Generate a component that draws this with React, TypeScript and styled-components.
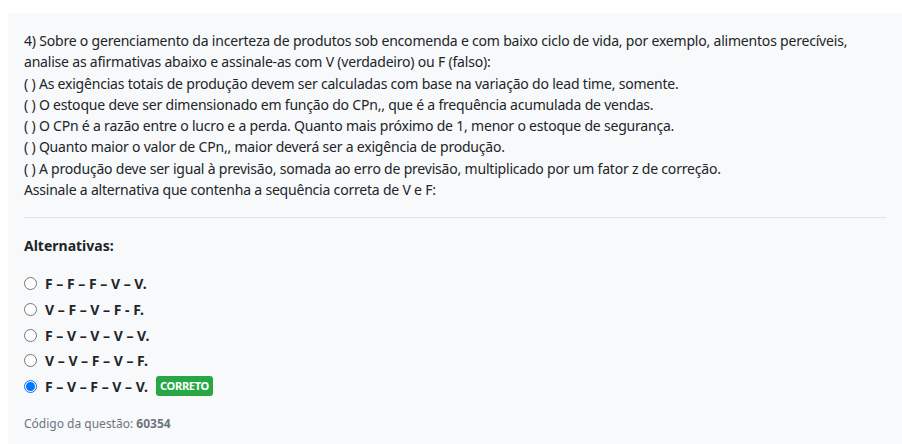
import React from "react";
import styled, { createGlobalStyle } from "styled-components";

const Global = createGlobalStyle`
  html, body { margin: 0; padding: 0; background: #fff; }
  body { padding: 13px 0 0 8px; font-family: "Noto Sans", "Open Sans", sans-serif; color: #212529; }
  * { box-sizing: border-box; }
`;

const Panel = styled.div`
  background: #f8f9fa;
  padding: 17px 16px 16px 16px;
  min-height: 431px;
`;

const Statement = styled.div`
  font-size: 14px;
  line-height: 21.3px;
  letter-spacing: -0.2px;
`;

const Line = styled.div``;

const Divider = styled.hr`
  border: 0;
  border-top: 1px solid #dee2e6;
  margin: 17px 0 17px 0;
`;

const Heading = styled.div`
  font-weight: 700;
  font-size: 14px;
  line-height: 21px;
  margin-bottom: 14.5px;
`;

const Options = styled.div`
  display: flex;
  flex-direction: column;
`;

const Option = styled.label`
  display: flex;
  align-items: center;
  height: 25.7px;
  font-size: 14px;
  font-weight: 700;
`;

const Radio = styled.span<{ $checked?: boolean }>`
  width: 13px;
  height: 13px;
  border-radius: 50%;
  flex: none;
  margin-right: 8px;
  border: ${(p) => (p.$checked ? "1px solid #0075ff" : "1px solid #767676")};
  background: #fff;
  display: flex;
  align-items: center;
  justify-content: center;
  &::after {
    content: "";
    display: ${(p) => (p.$checked ? "block" : "none")};
    width: 9px;
    height: 9px;
    border-radius: 50%;
    background: #0075ff;
  }
`;

const Badge = styled.span`
  background: #28a745;
  color: #fff;
  font-size: 11px;
  font-weight: 700;
  border-radius: 3px;
  padding: 0 4px;
  height: 20px;
  line-height: 20px;
  margin-left: 8px;
  letter-spacing: -0.3px;
`;

const Code = styled.div`
  margin-top: 15.5px;
  font-size: 12px;
  color: #6c757d;
  b { font-weight: 700; }
`;

const lines = [
  "4) Sobre o gerenciamento da incerteza de produtos sob encomenda e com baixo ciclo de vida, por exemplo, alimentos perecíveis,",
  "analise as afirmativas abaixo e assinale-as com V (verdadeiro) ou F (falso):",
  "( ) As exigências totais de produção devem ser calculadas com base na variação do lead time, somente.",
  "( ) O estoque deve ser dimensionado em função do CPn,, que é a frequência acumulada de vendas.",
  "( ) O CPn é a razão entre o lucro e a perda. Quanto mais próximo de 1, menor o estoque de segurança.",
  "( ) Quanto maior o valor de CPn,, maior deverá ser a exigência de produção.",
  "( ) A produção deve ser igual à previsão, somada ao erro de previsão, multiplicado por um fator z de correção.",
  "Assinale a alternativa que contenha a sequência correta de V e F:",
];

const options = [
  "F – F – F – V – V.",
  "V – F – V – F - F.",
  "F – V – V – V – V.",
  "V – V – F – V – F.",
  "F – V – F – V – V.",
];

export default function App() {
  return (
    <>
      <Global />
      <Panel>
        <Statement>
          {lines.map((l, i) => (
            <Line key={i}>{l}</Line>
          ))}
        </Statement>
        <Divider />
        <Heading>Alternativas:</Heading>
        <Options>
          {options.map((o, i) => (
            <Option key={i}>
              <Radio $checked={i === 4} />
              {o}
              {i === 4 && <Badge>CORRETO</Badge>}
            </Option>
          ))}
        </Options>
        <Code>
          Código da questão: <b>60354</b>
        </Code>
      </Panel>
    </>
  );
}
